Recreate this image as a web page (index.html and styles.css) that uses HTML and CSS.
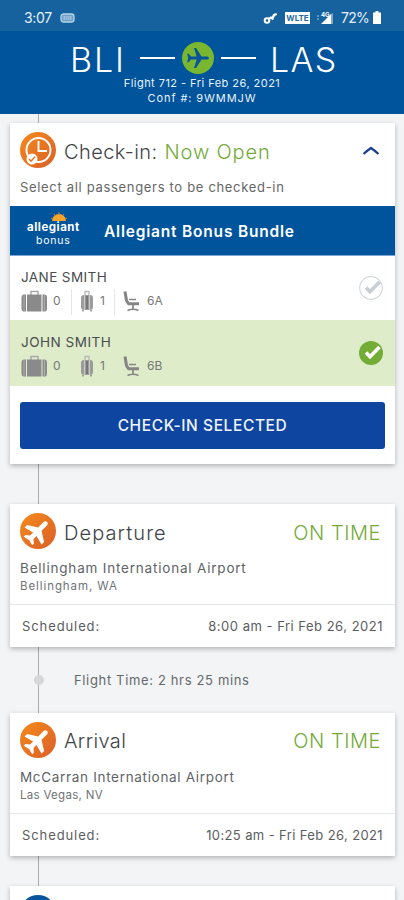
FILE: index.html
```html
<!DOCTYPE html>
<html lang="en">
<head>
<meta charset="utf-8">
<title>Flight 712</title>
<link rel="stylesheet" href="styles.css">
</head>
<body>
<svg class="defs" width="0" height="0" aria-hidden="true">
  <defs>
    <linearGradient id="orange" x1="0" y1="0" x2="1" y2="1"><stop offset="0" stop-color="#f58a1c"/><stop offset="1" stop-color="#d95f29"/></linearGradient>
    <path id="plane" d="M21 16v-2l-8-5V3.5a1.5 1.5 0 0 0-3 0V9l-8 5v2l8-2.500V19l-2.500 2v1.500l4-1 4 1V21L13 19v-5.500z"/>
    <path id="jet" d="M13.500 9.500V3.500Q13.500 1 11.500 1T9.500 3.500V9.500L1.500 14.500v3l8-2V19l-3 2.500v2l5-1.300 5 1.300v-2l-3-2.500v-3.500l8 2v-3z"/>
    <symbol id="suitcase" viewBox="0 0 26 22"><path d="M10 5V1.500h7V5" fill="none" stroke="#aaa" stroke-width="1.500"/><path d="M6 4.500h14.500v17H6z" fill="#8a8a8a"/><path d="M5 4.500v17H2.500q-2-.5-2-3v-11q0-2.500 2-3zM21.500 4.500v17H24q2-.5 2-3v-11q0-2.500-2-3z" fill="#8a8a8a"/><path d="M3 5v16M23.500 5v16" stroke="#b5b5b5" stroke-width=".8"/></symbol>
    <symbol id="carryon" viewBox="0 0 14 22"><path d="M5 5V1.500h4V5" fill="none" stroke="#b8b8b8" stroke-width="1.300"/><rect x="1" y="5" width="12" height="15" rx="3" fill="#9b9b9b"/><path d="M4.500 5v15M9.500 5v15" stroke="#d5d5d5" stroke-width=".8"/><path d="M7 6v13" stroke="#777" stroke-width="2"/><path d="M3 20v1.500M11 20v1.500" stroke="#888" stroke-width="1.500"/></symbol>
    <symbol id="seat" viewBox="0 0 18 22"><path d="M2 1.500l1.500 9 2 3.200H16" fill="none" stroke="#858585" stroke-width="3" stroke-linejoin="round"/><path d="M6 9.500h7M10 15v4M4.500 20.500q5.500-2.500 11 0" fill="none" stroke="#858585" stroke-width="1.700"/></symbol>
  </defs>
</svg>
<div class="screen">
  <div class="status">
    <span class="clock">3:07</span>
    <svg class="card-ico" width="15" height="10" viewBox="0 0 15 10"><rect x="1" y="1" width="13" height="8" rx="2.500" fill="#6d9fc9" stroke="#b7d2e7" stroke-width="1.300"/><path d="M3.500 4h8M3.500 6h8" stroke="#d4e4f1" stroke-dasharray="1.500 .7"/></svg>
    <span class="grow"></span>
    <svg class="key" width="15" height="14" viewBox="0 0 15 14"><circle cx="4" cy="9.500" r="2.300" fill="none" stroke="#fff" stroke-width="2"/><path d="M5.500 8L8 6.500l1.500 1L11 4l2.800-1" fill="none" stroke="#fff" stroke-width="2.300"/></svg>
    <span class="wlte">WLTE</span>
    <svg class="signal" width="18" height="14" viewBox="0 0 18 14"><path d="M1 5h2M1 8h2" stroke="#a4c3dd"/><path d="M15 3v10H5z" fill="#fff"/><path d="M15 3v10h2V2z" fill="#7ca9cd"/><text x="5" y="6" font-family="Inter" font-size="6" font-weight="700" fill="#fff">4G</text></svg>
    <span class="pct">72%</span>
    <svg class="battery" width="8" height="13" viewBox="0 0 8 13"><path d="M2.500 0h3v1.500H8V13H0V1.500h2.500z" fill="#fff"/></svg>
  </div>
  <header class="top">
    <div class="route">
      <span class="code bli">BLI</span><i class="dash"></i>
      <svg class="badge" width="32" height="32" viewBox="0 0 32 32"><circle cx="16" cy="16" r="16" fill="#78b72f"/><use href="#plane" transform="translate(29 3.800) rotate(90) scale(1.060)" fill="#07549c"/></svg>
      <i class="dash"></i><span class="code las">LAS</span>
    </div>
    <div class="sub s1">Flight 712 - Fri Feb 26, 2021</div>
    <div class="sub s2">Conf #: 9WMMJW</div>
  </header>
  <main class="timeline">
    <section class="card checkin">
      <div class="head">
        <svg class="round" width="36" height="36" viewBox="0 0 36 36"><circle cx="18" cy="18" r="18" fill="url(#orange)"/><circle cx="18.500" cy="18" r="12" fill="none" stroke="#fff" stroke-width="1.900"/><path d="M18.500 9v10H27" fill="none" stroke="#fff" stroke-width="1.900"/><circle cx="12" cy="27" r="5.500" fill="#fff"/><path d="M9 27l2 2.200 4-4.500" fill="none" stroke="#e8721f" stroke-width="1.500"/></svg>
        <h2 class="t-check">Check-in:</h2><span class="open">Now Open</span>
        <svg class="chev" width="18" height="10" viewBox="0 0 18 10"><path d="M1.500 9Q6 5 9 3q3 2 7.500 6" fill="none" stroke="#173e91" stroke-width="2.200"/></svg>
      </div>
      <p class="hint">Select all passengers to be checked-in</p>
      <div class="bundle">
        <div class="logo"><svg class="sun" width="18" height="9" viewBox="0 0 18 9"><path d="M2 9a7 7 0 0 1 14 0z" fill="#f6a52c"/><path d="M1 6l2 1M4 2l1.500 2M9 0v3M14 2l-1.500 2M17 6l-2 1" stroke="#c9863f"/></svg><b>allegiant</b><span>bonus</span></div>
        <span class="btitle">Allegiant Bonus Bundle</span>
      </div>
      <div class="pax">
        <div class="info"><div class="name n1">JANE SMITH</div>
          <div class="items"><span class="it i1"><svg width="26" height="22"><use href="#suitcase"/></svg>0</span><span class="it i2"><svg width="14" height="22"><use href="#carryon"/></svg>1</span><span class="it i3"><svg width="18" height="22"><use href="#seat"/></svg>6A</span></div></div>
        <svg class="tick" width="24" height="24" viewBox="0 0 24 24"><circle cx="12" cy="12" r="11.300" fill="#fff" stroke="#d5dae0" stroke-width="1.200"/><path d="M7 11.500l4 4.200L20.500 6" fill="none" stroke="#c9ced4" stroke-width="3.600"/></svg>
      </div>
      <div class="pax selected">
        <div class="info"><div class="name n2">JOHN SMITH</div>
          <div class="items"><span class="it i1"><svg width="26" height="22"><use href="#suitcase"/></svg>0</span><span class="it i2"><svg width="14" height="22"><use href="#carryon"/></svg>1</span><span class="it i3"><svg width="18" height="22"><use href="#seat"/></svg>6B</span></div></div>
        <svg class="tick" width="24" height="24" viewBox="0 0 24 24"><circle cx="12" cy="12" r="12" fill="#73ad36"/><path d="M7 11.500l4 4.200L20.500 6" fill="none" stroke="#fff" stroke-width="3.600"/></svg>
      </div>
      <button class="cta">CHECK-IN SELECTED</button>
    </section>

    <section class="card leg dep">
      <div class="head">
        <svg class="round" width="36" height="36" viewBox="0 0 36 36"><circle cx="18" cy="18" r="18" fill="url(#orange)"/><use href="#jet" transform="translate(17.300 18.700) rotate(45) scale(1.200) translate(-11.500 -12.500)" fill="#fff"/></svg>
        <h2 class="t-dep">Departure</h2><span class="ontime">ON TIME</span>
      </div>
      <div class="place"><p class="airport a1">Bellingham International Airport</p><p class="city c1">Bellingham, WA</p></div>
      <div class="sched"><span class="sl">Scheduled:</span><span class="d1">8:00 am - Fri Feb 26, 2021</span></div>
    </section>

    <div class="flight"><i class="dot"></i><span>Flight Time: 2 hrs 25 mins</span></div>

    <section class="card leg arr">
      <div class="head">
        <svg class="round" width="36" height="36" viewBox="0 0 36 36"><circle cx="18" cy="18" r="18" fill="url(#orange)"/><use href="#jet" transform="translate(17.300 18.700) rotate(45) scale(1.200) translate(-11.500 -12.500)" fill="#fff"/></svg>
        <h2 class="t-arr">Arrival</h2><span class="ontime">ON TIME</span>
      </div>
      <div class="place"><p class="airport a2">McCarran International Airport</p><p class="city c2">Las Vegas, NV</p></div>
      <div class="sched"><span class="sl">Scheduled:</span><span class="d2">10:25 am - Fri Feb 26, 2021</span></div>
    </section>

    <section class="card next"><svg class="round" width="36" height="36" viewBox="0 0 36 36"><circle cx="18" cy="18" r="18" fill="#07549c"/></svg></section>
  </main>
</div>
</body>
</html>
```

FILE: styles.css
```css
* { box-sizing: border-box; margin: 0; padding: 0; }
body { font-family: Inter, sans-serif; color: #555; }
.defs { position: absolute; }
.screen { width: 404px; height: 900px; overflow: hidden; background: #f2f4f6; display: flex; flex-direction: column; }
span, h2, p, .sub, .name { white-space: nowrap; }
svg { display: block; flex: none; }

.status { height: 31px; flex: none; background: #16629f; display: flex; align-items: center; padding: 4px 23px 0 24px; color: #e6f0f8; }
.clock { font-size: 14px; letter-spacing: -0.3px; width: 36px; }
.grow { flex: 1; }
.key { margin-right: 7px; }
.wlte { width: 25px; height: 12px; background: #fff; color: #2769a3; font-size: 8px; line-height: 12px; font-weight: 700; text-align: center; }
.signal { margin: 0 7px 0 6px; }
.pct { font-size: 14px; letter-spacing: -0.7px; width: 28px; }
.battery { margin-left: 4px; }

.top { height: 83px; flex: none; background: #00549c; color: #fff; padding-top: 10px; text-align: center; }
.route { display: flex; align-items: center; justify-content: center; height: 34px; padding-left: 3px; }
.code { font-size: 34px; font-weight: 300; line-height: 34px; padding-top: 3px; }
.bli { width: 58px; text-align: left; letter-spacing: 1.9px; }
.las { width: 67px; text-align: left; letter-spacing: 1.3px; }
.dash { width: 35px; height: 2px; background: #fff; margin: 0 7px 0 12px; }
.badge + .dash { margin: 0 14px 0 7px; }
.sub { font-size: 11px; line-height: 15px; color: #e9f2fa; position: relative; top: 1px; }
.s1 { letter-spacing: 0.46px; }
.s2 { letter-spacing: 0.9px; }

.timeline { flex: 1; padding: 9px 9px 0 10px; background: linear-gradient(#a9adb1, #a9adb1) 38px 0 / 1px 100% no-repeat; }
.card { background: #fff; box-shadow: 0 2px 5px rgba(0, 0, 0, .27); }
.head { display: flex; align-items: center; height: 36px; padding: 0 15px 0 10px; }
h2, .open, .ontime { font-size: 20px; line-height: 26px; font-weight: 300; }
h2 { margin-left: 8px; color: #3f4347; padding-top: 3px; }
.open, .ontime { color: #73aa38; padding-top: 3px; }
.t-check { letter-spacing: 0.4px; }
.t-dep { letter-spacing: 1.1px; }
.t-arr { letter-spacing: 0.4px; }
.open { margin-left: 7px; letter-spacing: 0.85px; }
.chev, .ontime { margin-left: auto; }
.ontime { letter-spacing: 0.55px; margin-right: -1px; }

.checkin { height: 341px; padding-top: 9px; }
.hint { font-size: 13px; line-height: 20px; margin: 9px 0 0 10px; color: #666; letter-spacing: 0.68px; }
.bundle { height: 50px; margin-top: 9px; background: #00549c; border-bottom: 1px solid #7aa5d4; color: #fff; display: flex; align-items: center; }
.logo { width: 84px; padding: 6px 0 0 17px; display: flex; flex-direction: column; position: relative; }
.logo b { font-size: 11.5px; line-height: 14px; letter-spacing: 0.5px; }
.logo span { font-size: 10.5px; line-height: 13px; letter-spacing: 0.8px; padding-left: 9px; }
.sun { position: absolute; left: 40px; top: -2px; }
.btitle { font-size: 15.5px; font-weight: 600; margin-left: 10px; letter-spacing: 0.8px; padding-top: 1px; }
.pax { height: 64px; display: flex; align-items: center; justify-content: space-between; padding: 0 12px 0 11px; }
.selected { height: 66px; background: #deecc9; }
.name { font-size: 13.5px; line-height: 18px; color: #4a4d50; padding-top: 6px; }
.n1 { letter-spacing: 0.4px; }
.n2 { letter-spacing: 0.5px; }
.items { display: flex; margin-top: 3px; height: 26px; }
.it { display: flex; font-size: 12px; line-height: 23px; color: #777; gap: 6px; }
.it svg { margin-top: 1px; }
.i1 { width: 51px; border-right: 1px solid #e5e5e5; }
.i2 { width: 43px; padding-left: 8px; border-right: 1px solid #e5e5e5; }
.i3 { padding-left: 8px; }
.selected .it { border-color: transparent; }
.cta { display: block; width: 365px; height: 47px; margin: 16px 0 0 10px; border: 0; border-radius: 3px; background: #0e45a0; color: #f0f5fc; font: 500 15.5px Inter, sans-serif; letter-spacing: 0.6px; }

.leg { height: 143px; padding-top: 9px; }
.dep { margin-top: 40px; }
.arr h2, .arr .ontime { padding-top: 1px; }
.place { height: 56px; padding: 9px 0 0 10px; border-bottom: 1px solid #e5e7e8; }
.airport { font-size: 13.5px; line-height: 20px; color: #606366; }
.a1 { letter-spacing: 0.8px; }
.a2 { letter-spacing: 0.68px; }
.city { font-size: 11.5px; line-height: 16px; color: #707376; }
.c1 { letter-spacing: 0.92px; }
.c2 { letter-spacing: 0.3px; }
.sched { display: flex; justify-content: space-between; align-items: center; height: 42px; padding: 0 12px; font-size: 13px; color: #5a5d60; }
.sl { letter-spacing: 0.9px; }
.d1 { letter-spacing: 0.5px; }
.d2 { letter-spacing: 0.38px; }
.flight { height: 66px; display: flex; align-items: center; font-size: 13px; letter-spacing: 0.65px; color: #66696c; }
.dot { width: 10px; height: 10px; border-radius: 50%; background: #d5d7d9; margin: 0 30px 0 24px; }
.next { height: 60px; margin-top: 30px; padding: 9px 0 0 10px; }
```
